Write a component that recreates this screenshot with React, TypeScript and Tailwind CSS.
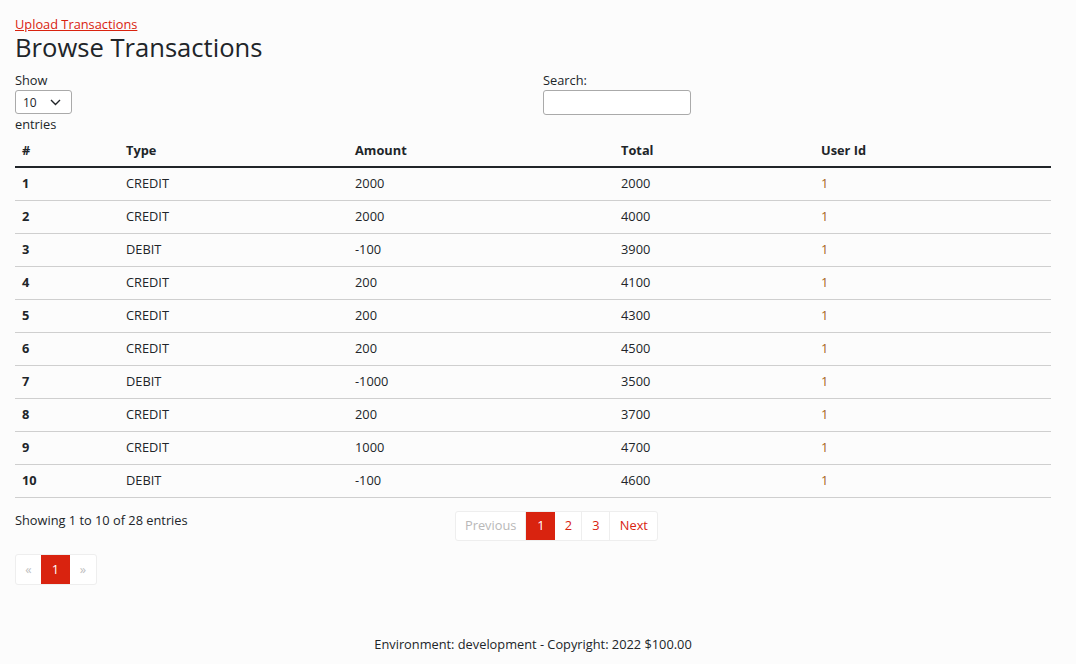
import React from "react";

const rows = [
  [1, "CREDIT", 2000, 2000],
  [2, "CREDIT", 2000, 4000],
  [3, "DEBIT", -100, 3900],
  [4, "CREDIT", 200, 4100],
  [5, "CREDIT", 200, 4300],
  [6, "CREDIT", 200, 4500],
  [7, "DEBIT", -1000, 3500],
  [8, "CREDIT", 200, 3700],
  [9, "CREDIT", 1000, 4700],
  [10, "DEBIT", -100, 4600],
];

export default function App() {
  return (
    <div
      className="min-h-[664px] bg-[#fcfcfc] text-[#212529] text-[12.8px] leading-[17px] flex flex-col"
      style={{ fontFamily: '"Open Sans", "Noto Sans", sans-serif' }}
    >
      <div className="pl-[15px] pr-[25px] pt-[16px] flex-1">
        <a href="#" className="text-[#d9230f] underline block leading-[17px]">
          Upload Transactions
        </a>
        <h1 className="text-[25.6px] leading-[28px] mt-[1px] font-normal mb-[10px]">Browse Transactions</h1>
        <div className="grid grid-cols-2">
          <div>
            <div className="leading-[17px]">Show</div>
            <div className="mt-[1px] w-[57px] h-[24px] border border-[#aaa] rounded-[3px] flex items-center justify-between pl-[7px] pr-[10px] text-[12px] bg-white">
              <span>10</span>
              <svg width="11" height="7" viewBox="0 0 11 7" fill="none">
                <path d="M1 1l4.5 4.5L10 1" stroke="#212529" strokeWidth="1.4" />
              </svg>
            </div>
            <div className="mt-[2px] leading-[17px]">entries</div>
          </div>
          <div className="pl-[10px]">
            <div className="leading-[17px]">Search:</div>
            <div className="mt-[1px] w-[148px] h-[25px] border border-[#aaa] rounded-[3px] bg-white" />
          </div>
        </div>
        <table className="w-full border-collapse mt-[1px]">
          <colgroup>
            <col className="w-[104px]" />
            <col className="w-[229px]" />
            <col className="w-[266px]" />
            <col className="w-[200px]" />
            <col />
          </colgroup>
          <thead>
            <tr className="border-b-2 border-[#212529]">
              <th className="text-left font-bold px-[7px] pt-[8px] pb-[7px]">#</th>
              <th className="text-left font-bold px-[7px] pt-[8px] pb-[7px]">Type</th>
              <th className="text-left font-bold px-[7px] pt-[8px] pb-[7px]">Amount</th>
              <th className="text-left font-bold px-[7px] pt-[8px] pb-[7px]">Total</th>
              <th className="text-left font-bold px-[7px] pt-[8px] pb-[7px]">User Id</th>
            </tr>
          </thead>
          <tbody>
            {rows.map((r) => (
              <tr key={r[0]} className="border-b border-[#cfcfcf] h-[33px]">
                <td className="px-[7px] font-bold">{r[0]}</td>
                <td className="px-[7px]">{r[1]}</td>
                <td className="px-[7px]">{r[2]}</td>
                <td className="px-[7px]">{r[3]}</td>
                <td className="px-[7px] text-[#a8661c]">1</td>
              </tr>
            ))}
          </tbody>
        </table>
        <div className="grid grid-cols-[440px_1fr] mt-[14px]">
          <div className="leading-[17px]">Showing 1 to 10 of 28 entries</div>
          <div className="flex">
            <div className="flex h-[30px] -mt-[1px] border border-[#eee] rounded-[3px] bg-white">
              <span className="px-[9px] flex items-center text-[#b8b8b8] border-r border-[#eee]">Previous</span>
              <span className="w-[29px] flex items-center justify-center bg-[#d9230f] text-white">1</span>
              <span className="w-[27px] flex items-center justify-center text-[#d9230f] border-r border-[#eee]">2</span>
              <span className="w-[28px] flex items-center justify-center text-[#d9230f] border-r border-[#eee]">3</span>
              <span className="w-[47px] flex items-center justify-center text-[#d9230f]">Next</span>
            </div>
          </div>
        </div>
        <div className="flex mt-[13px]">
          <div className="flex h-[31px] border border-[#eee] rounded-[3px] bg-white">
            <span className="w-[25px] flex items-center justify-center text-[#c0c0c0]">«</span>
            <span className="w-[29px] flex items-center justify-center bg-[#d9230f] text-white">1</span>
            <span className="w-[26px] flex items-center justify-center text-[#c0c0c0]">»</span>
          </div>
        </div>
      </div>
      <footer className="pl-[15px] pr-[25px] text-center pb-[11px] leading-[17px]">
        Environment: development - Copyright: 2022 $100.00
      </footer>
    </div>
  );
}
